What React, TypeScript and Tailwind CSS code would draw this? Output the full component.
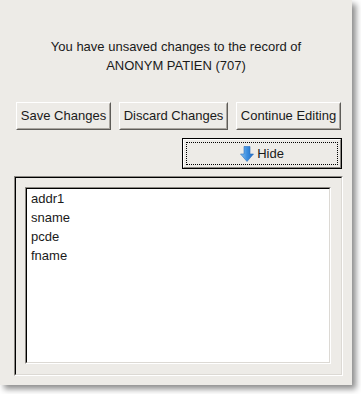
import React from 'react'

const font = { fontFamily: '"Liberation Sans", Arial, sans-serif' }

function Button({ label, width }: { label: string; width: string }) {
  return (
    <div className={`${width} h-[28px] border border-t-white border-l-white border-b-[#5e5c58] border-r-[#5e5c58] bg-[#edebe7]`}>
      <div className="w-full h-full border border-t-[#edebe7] border-l-[#edebe7] border-b-[#a9a59f] border-r-[#a9a59f] flex items-center justify-center text-[13px] text-[#1a1a1a]">
        {label}
      </div>
    </div>
  )
}

function DownArrow() {
  return (
    <svg width="14" height="16" viewBox="0 0 14 16">
      <defs>
        <linearGradient id="ag" x1="0" y1="0" x2="1" y2="0">
          <stop offset="0" stopColor="#8cc4f0" />
          <stop offset="0.5" stopColor="#3c8ee0" />
          <stop offset="1" stopColor="#1f6cc4" />
        </linearGradient>
      </defs>
      <path d="M4 0.5 H10 V8 H13.5 L7 15.5 L0.5 8 H4 Z" fill="url(#ag)" stroke="#2a6fbf" strokeWidth="0.6" />
    </svg>
  )
}

export default function App() {
  const fields = ['addr1', 'sname', 'pcde', 'fname']

  return (
    <div className="w-[361px] h-[394px] bg-white" style={font}>
      <div className="w-[352px] h-[385px] bg-[#edebe7] shadow-[4px_4px_6px_rgba(0,0,0,0.45)] flex flex-col pt-[37px]">
        <div className="text-center text-[13px] leading-[19px] text-[#1a1a1a]">
          <div>You have unsaved changes to the record of</div>
          <div>ANONYM PATIEN (707)</div>
        </div>

        <div className="flex gap-[8px] pl-[16px] mt-[27px]">
          <Button label="Save Changes" width="w-[95px]" />
          <Button label="Discard Changes" width="w-[109px]" />
          <Button label="Continue Editing" width="w-[105px]" />
        </div>

        <div className="flex justify-end pr-[10px] mt-[8px]">
          <div className="w-[160px] h-[31px] border border-black bg-[#edebe7]">
            <div className="w-full h-full border border-t-white border-l-white border-b-[#8d8a85] border-r-[#8d8a85] p-[2px]">
              <div className="w-full h-full border border-dotted border-black flex items-center justify-center gap-[3px] text-[13px] text-[#1a1a1a]">
                <DownArrow />
                <span>Hide</span>
              </div>
            </div>
          </div>
        </div>

        <div className="ml-[14px] mt-[7px] w-[329px] h-[200px] border border-t-[#8d8a85] border-l-[#8d8a85] border-b-white border-r-white">
          <div className="w-full h-full border border-t-black border-l-black border-b-[#dcd9d4] border-r-[#dcd9d4] pl-[9px] pr-[10px] pt-[9px] pb-[10px]">
            <div className="w-full h-full border border-t-[#8d8a85] border-l-[#8d8a85] border-b-white border-r-white">
              <div className="w-full h-full bg-white border border-t-black border-l-black border-b-[#dcd9d4] border-r-[#dcd9d4] pl-[4px] text-[13px] leading-[19px] text-[#1a1a1a]">
                {fields.map((f) => (
                  <div key={f}>{f}</div>
                ))}
              </div>
            </div>
          </div>
        </div>
      </div>
    </div>
  )
}
